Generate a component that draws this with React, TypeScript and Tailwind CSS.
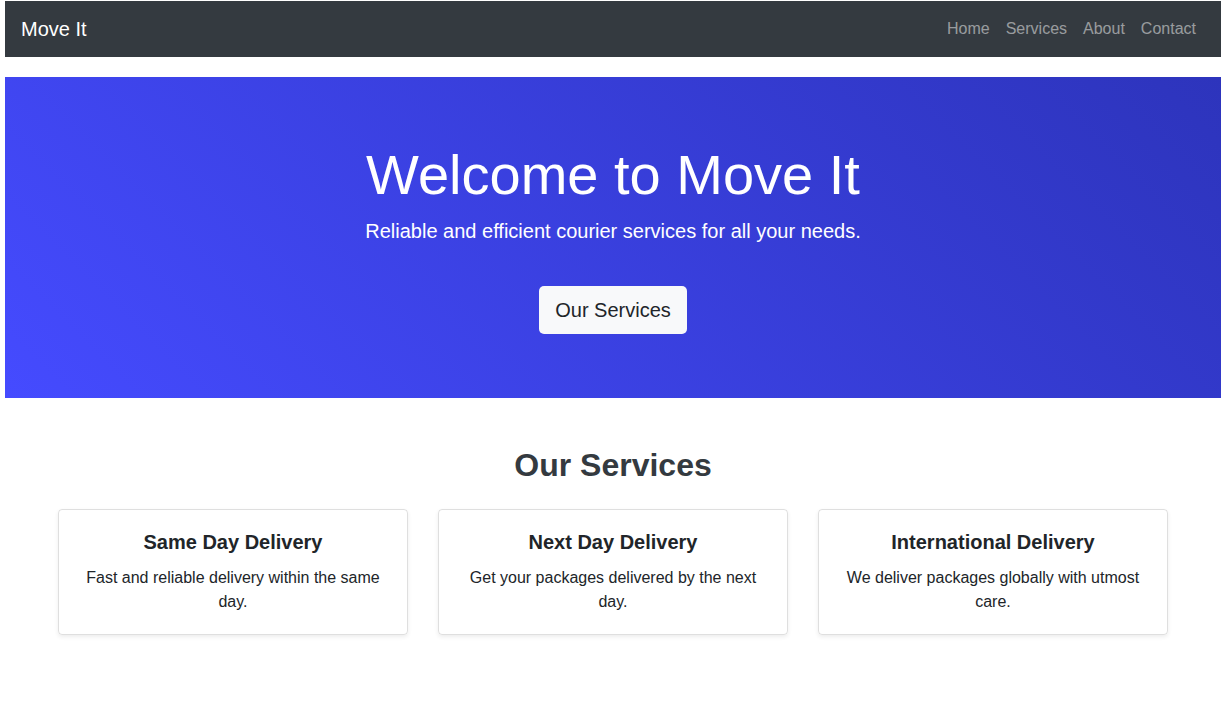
import React from "react";

const cards = [
  { title: "Same Day Delivery", text: "Fast and reliable delivery within the same day." },
  { title: "Next Day Delivery", text: "Get your packages delivered by the next day." },
  { title: "International Delivery", text: "We deliver packages globally with utmost care." },
];

export default function App() {
  return (
    <div className="min-h-[701px] bg-white px-[5px] pt-px" style={{ fontFamily: '"Liberation Sans", Arial, sans-serif' }}>
      <nav className="h-[56px] bg-[#343a40] flex items-center justify-between pl-4 pr-4">
        <span className="text-[20px] leading-[30px] text-white">Move It</span>
        <ul className="flex items-center pr-[1px]">
          {["Home", "Services", "About", "Contact"].map((l) => (
            <li key={l}>
              <a className="block px-2 text-[16px] leading-6 text-white/50">{l}</a>
            </li>
          ))}
        </ul>
      </nav>

      <section className="mt-5 h-[321px] bg-linear-45 from-[#454bff] to-[#2d34bc] flex flex-col items-center pt-16 text-white">
        <h1 className="text-[56px] leading-[67px] font-light">Welcome to Move It</h1>
        <p className="mt-2 text-[20px] leading-[30px]">Reliable and efficient courier services for all your needs.</p>
        <button className="mt-10 h-[48px] px-4 rounded-[5px] bg-[#f8f9fa] text-[#212529] text-[20px] leading-[30px]">
          Our Services
        </button>
      </section>

      <section className="flex flex-col items-center pt-12">
        <h2 className="text-[32px] leading-[38px] font-bold text-[#343a40]">Our Services</h2>
        <div className="mt-[25px] grid grid-cols-[350px_350px_350px] gap-[30px]">
          {cards.map((c) => (
            <div
              key={c.title}
              className="border border-black/[0.125] rounded-[4px] shadow-[0_2px_4px_rgba(0,0,0,0.075)] p-5 text-center text-[#212529]"
            >
              <h5 className="text-[20px] leading-6 font-bold mb-3">{c.title}</h5>
              <p className="text-[16px] leading-6">{c.text}</p>
            </div>
          ))}
        </div>
      </section>
    </div>
  );
}
